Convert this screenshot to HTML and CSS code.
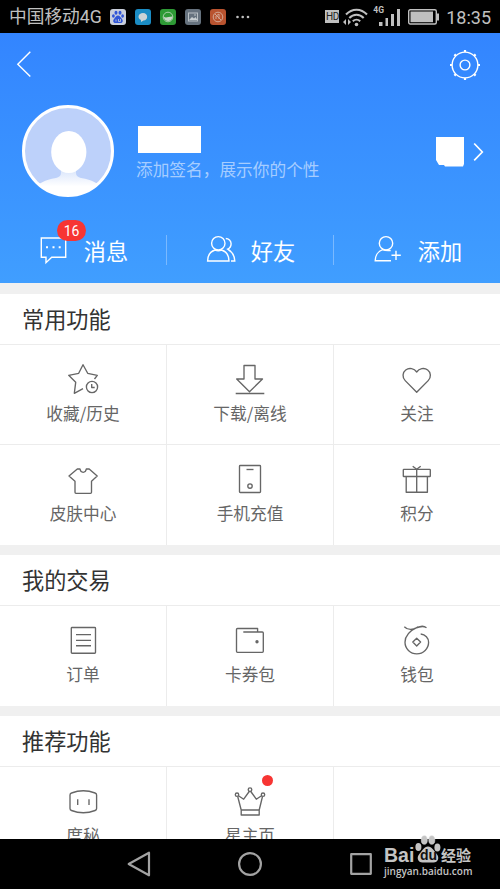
FILE: index.html
```html
<!DOCTYPE html>
<html lang="zh-CN">
<head>
<meta charset="utf-8">
<title>个人中心</title>
<link rel="stylesheet" href="styles.css">
</head>
<body>
<div class="phone">
  <div class="status">
    <span class="carrier">中国移动4G</span>
    <div class="apps">
      <svg viewBox="0 0 16 16"><rect width="16" height="16" rx="3" fill="#c9cfdc"/><g fill="#2f55d8"><ellipse cx="6" cy="3.8" rx="1.5" ry="2"/><ellipse cx="10" cy="3.8" rx="1.5" ry="2"/><ellipse cx="3.4" cy="7" rx="1.4" ry="1.8"/><ellipse cx="12.6" cy="7" rx="1.4" ry="1.8"/><path d="M8 6.600c2 0 2.600 2 4 3.400 1.600 1.800.6 4-1.500 4h-5c-2.100 0-3.100-2.200-1.500-4C5.400 8.600 6 6.600 8 6.600z"/></g><path d="M6 10.500v2M8.500 10v2.500h2V10" fill="none" stroke="#c9cfdc" stroke-width=".8"/></svg>
      <svg viewBox="0 0 16 16"><rect width="16" height="16" rx="3" fill="#1b8cc4"/><path d="M8 4c5.500 0 5.500 7.500.5 7.500L6 13v-2C2 9.500 3 4 8 4z" fill="#cbd3d6"/></svg>
      <svg viewBox="0 0 16 16"><rect width="16" height="16" rx="3" fill="#2e9a35"/><circle cx="8" cy="8" r="4.800" fill="none" stroke="#a9cfaa"/><path d="M3.500 7.500c2.500 2 4 .3 9 0-.5 6-8 6-9 0z" fill="#c9d6c9"/></svg>
      <svg viewBox="0 0 16 16"><rect width="16" height="16" rx="3" fill="#66727e"/><rect x="3.500" y="4" width="9" height="8" fill="none" stroke="#b9c0c5"/><path d="M4 11l3-3 2 1.500L10.500 8l2 3z" fill="#c9cfd2"/><circle cx="10" cy="6" r=".8" fill="#c9cfd2"/></svg>
      <svg viewBox="0 0 16 16"><rect width="16" height="16" rx="3" fill="#b9532f"/><g fill="none" stroke="#d3a795"><circle cx="8" cy="8" r="4.800"/><path d="M5 5l6 6M6 10V7l3-2v5"/></g></svg>
    </div>
    <svg class="more" viewBox="0 0 14 4" fill="#c0c0c0"><circle cx="1.500" cy="2" r="1.300"/><circle cx="6.700" cy="2" r="1.300"/><circle cx="12" cy="2" r="1.300"/></svg>
    <span class="hd">HD</span>
    <svg class="wifi" viewBox="0 0 26 20"><g fill="none" stroke="#c0c0c0" stroke-width="2"><path d="M3 7.500C9 1 18 1 24 7.500M6.300 11c4-4.300 10.400-4.300 14.400 0M9.800 14.300c2.200-2.200 5.200-2.200 7.400 0"/></g><circle cx="13.500" cy="17.500" r="1.800" fill="#c0c0c0"/><path d="M3 12v6l-3-3zM5 18v-6l3 3z" fill="#c0c0c0"/></svg>
    <div class="signal">
      <span>4G</span>
      <svg viewBox="0 0 21 18" fill="#c0c0c0"><path d="M0 13h3.500v4H0zM6.500 9H9v8H6.500zM12 5h3v12h-3zM18 0h3v17h-3z"/></svg>
    </div>
    <svg class="battery" viewBox="0 0 32 16"><rect x=".7" y=".7" width="27.600" height="14.300" rx="1.500" fill="none" stroke="#c0c0c0" stroke-width="1.400"/><rect x="2.500" y="2.500" width="22.500" height="10.700" fill="#c0c0c0"/><path d="M29 4.500h2v7h-2z" fill="#c0c0c0"/></svg>
    <span class="time">18:35</span>
  </div>

  <header class="header">
    <div class="toolbar">
      <svg class="back" viewBox="0 0 16 28"><path d="M14.300 1.800L1.800 14.200l12.500 12.300"/></svg>
      <svg class="gear" viewBox="0 0 32 32"><circle cx="16" cy="16" r="12.900"/><circle cx="16" cy="16" r="4.900"/><path d="M16 1v2M16 29v2M1 16h2M29 16h2M5.400 5.400l1.600 1.600M25 25l1.600 1.600M5.400 26.600L7 25M25 7l1.600-1.600" stroke-width="2.200"/></svg>
    </div>
    <div class="profile">
      <svg class="avatar" viewBox="0 0 92 92">
        <defs>
          <clipPath id="face"><circle cx="46" cy="46" r="44"/></clipPath>
          <linearGradient id="neck" x1="0" y1="0" x2="0" y2="1"><stop offset="0" stop-color="#cfdefa"/><stop offset=".65" stop-color="#fff"/></linearGradient>
        </defs>
        <circle cx="46" cy="46" r="45" fill="#bdd1fa"/>
        <g clip-path="url(#face)"><path d="M39 60h15v8c0 3 2 4 5 5 12 2 16 5 22 10v10H12V83c6-5 10-8 22-10 3-1 5-2 5-5z" fill="url(#neck)"/></g>
        <ellipse cx="46.800" cy="47" rx="17.600" ry="21" fill="#fff"/>
        <circle cx="46" cy="46" r="44.500" fill="none" stroke="#fff" stroke-width="3"/>
      </svg>
      <div class="who">
        <div class="name"></div>
        <div class="sign">添加签名，展示你的个性</div>
      </div>
      <svg class="qr" viewBox="0 0 28 30"><path d="M0 0h28v27l-1 2.500H9L8 28H3L0 23z" fill="#fff"/></svg>
      <svg class="go" viewBox="0 0 11 20"><path d="M1.200 1.500L9.300 10l-8.100 8.300"/></svg>
    </div>
    <nav class="actions">
      <a class="action">
        <svg viewBox="0 0 32 32"><path d="M3.300 4h24.400v19.300h-14l-5.700 5.400v-5.400H3.300z"/><path d="M8 13.300h2M14.500 13.300h2M20.700 13.300h2" stroke-width="2"/></svg>
        <span>消息</span><b class="badge">16</b>
      </a>
      <a class="action">
        <svg viewBox="0 0 32 32"><circle cx="13.300" cy="9.300" r="6.700"/><path d="M2.600 27c0-6 3-9.500 7.500-11 2 .9 4.400.9 6.400 0C21 17.500 24 21 24 27zM20.800 4.500c2.800 0 5.300 2.200 5.300 5.300 0 2.500-1.500 4.500-3.400 5.400 4.400 2.800 7.100 6.800 7.100 11.800H26"/></svg>
        <span>好友</span>
      </a>
      <a class="action">
        <svg viewBox="0 0 32 32"><circle cx="14" cy="9.300" r="6.700"/><path d="M19 26.700H3.200c0-5 3-9.500 7.500-11 2.300 1 5.500 1 8 .8M19.500 21.300h9.300M24 16.700V26"/></svg>
        <span>添加</span>
      </a>
    </nav>
  </header>

  <section class="section">
    <h2>常用功能</h2>
    <div class="grid">
      <div class="cell"><svg viewBox="0 0 34 34"><path d="M17 26.700l-8.700 4.600 1.400-11-7-7 10-2L17 2.700l4.700 8.600 9.600 2-2.800 3.700"/><circle cx="26" cy="25" r="5.600"/><path d="M25.700 22v3.500h3"/></svg><span>收藏/历史</span></div>
      <div class="cell"><svg viewBox="0 0 34 34"><path d="M11 3.500h11V17h7.500L16.500 29.700 3.700 17H11zM2.700 31.500h28.600"/></svg><span>下载/离线</span></div>
      <div class="cell"><svg viewBox="0 0 34 34"><path d="M16.700 30.300L5.200 18.600C2 15.300 2.500 10.300 5.700 8c3.600-2.700 8.500-1.500 11 2 2.500-3.500 7.400-4.700 11-2 3.200 2.300 3.700 7.300.5 10.600z"/></svg><span>关注</span></div>
      <div class="cell"><svg viewBox="0 0 34 34"><path d="M11.300 7H14c.8 4.400 5.500 4.400 6.300 0h2.900l8 7-5.700 5.200v11.100q0 1-1 1H10q-1 0-1-1V19.200L3 14z"/></svg><span>皮肤中心</span></div>
      <div class="cell"><svg viewBox="0 0 34 34"><rect x="6.500" y="3.500" width="21" height="27" rx=".8"/><path d="M13.500 7.500h7"/><circle cx="17" cy="24" r="2.200"/></svg><span>手机充值</span></div>
      <div class="cell"><svg viewBox="0 0 34 34"><rect x="3.300" y="7.300" width="27" height="7.200" rx=".6"/><path d="M6.200 14.500v15.700h21.200V14.500M16.700 7.300v22.900M12.700 4.200l4 3.100 4-3.100"/></svg><span>积分</span></div>
    </div>
  </section>

  <section class="section">
    <h2>我的交易</h2>
    <div class="grid">
      <div class="cell"><svg viewBox="0 0 34 34"><rect x="5.300" y="4.500" width="24.200" height="25.700" rx=".8"/><path d="M10 11.600h15M10 17.300h15M10 22.700h15"/></svg><span>订单</span></div>
      <div class="cell"><svg viewBox="0 0 34 34"><path d="M24.600 9V5.500H4.500q-1 0-1 1v21.800q0 1 1 1h24.800q1 0 1-1V10q0-1-1-1H10.300"/><circle cx="24" cy="18.700" r="1" class="dot"/></svg><span>卡券包</span></div>
      <div class="cell"><svg viewBox="0 0 34 34"><path d="M4.300 3.700c3 3 6.500 3.300 10 2C18.500 4 22.500 1.800 26.500 4.700M18 3.800C10 7.500 5 12.500 5 19.200a11.800 11.600 0 0 0 23.600 0c0-4.200-3.200-7.800-7.900-8.200"/><path d="M16.700 15.200l3.900 3.900-3.900 3.900-3.900-3.900z"/></svg><span>钱包</span></div>
    </div>
  </section>

  <section class="section last">
    <h2>推荐功能</h2>
    <div class="grid">
      <div class="cell"><svg viewBox="0 0 34 34"><path d="M4 11q0-1.500 1.500-2 11.800-4.500 23.600 0 1.500.5 1.500 2v13.500q0 1.500-1.500 2-11.800 4.500-23.600 0-1.500-.5-1.500-2zM11.700 15.300V21M23 15.300V21"/></svg><span>度秘</span></div>
      <div class="cell"><svg viewBox="0 0 34 34"><path d="M8.200 26h18v5h-18zM8.200 26L4.700 12.500M5.500 11.700l5.200 3.500 5.500-7.700M17.800 7.500l5.500 7.700 5.200-3.500M29.500 12.500L26.200 26"/><circle cx="4" cy="10.700" r="1.700"/><circle cx="17" cy="5.700" r="1.800"/><circle cx="30" cy="10.700" r="1.700"/></svg><span>星主页</span><i class="new"></i></div>
      <div class="cell"></div>
    </div>
  </section>

  <footer class="navbar">
    <svg viewBox="0 0 26 26"><path d="M2.700 13L23 1.700v22.600z"/></svg>
    <svg viewBox="0 0 26 26"><circle cx="13" cy="13" r="10.900"/></svg>
    <svg viewBox="0 0 26 26"><rect x="3.200" y="3.200" width="19.600" height="19.600"/></svg>
    <div class="brand">
      <div class="logo">
        <span class="bai">Bai</span>
        <span class="paw"><svg viewBox="0 0 26 28"><g fill="#c4c4c4"><ellipse cx="3.400" cy="12" rx="3" ry="4"/><ellipse cx="9.300" cy="5" rx="3" ry="4.300" stroke="#ddd" stroke-width=".6"/><ellipse cx="16.800" cy="5" rx="3" ry="4.300" stroke="#ddd" stroke-width=".6"/><ellipse cx="22.400" cy="12.500" rx="3" ry="4"/><path d="M13 11.500c4 0 5.500 4 8.500 7.300C25 22.700 23 27.500 18.500 27.500h-11C3 27.500 1 22.700 4.500 18.800 7.500 15.500 9 11.500 13 11.500z"/></g></svg><em>du</em></span>
        <span class="jy">经验</span>
      </div>
      <div class="url">jingyan.baidu.com</div>
    </div>
  </footer>
</div>
</body>
</html>
```
FILE: styles.css
```css
* { box-sizing: border-box; }
body {
  margin: 0;
  font-family: "Noto Sans CJK SC", sans-serif;
  background: #000;
}
svg { display: block; flex: none; }
.phone {
  width: 500px;
  height: 889px;
  display: flex;
  flex-direction: column;
  overflow: hidden;
  background: #f0f0f0;
}

/* system status bar */
.status {
  flex: none;
  height: 33px;
  display: flex;
  align-items: center;
  padding: 0 9px;
  background: #000;
  color: #c0c0c0;
}
.carrier {
  width: 102px;
  padding-top: 2px;
  font: 17.700px/33px Roboto, "Noto Sans CJK SC", sans-serif;
  white-space: nowrap;
}
.apps { display: flex; gap: 9px; }
.apps svg { width: 16px; height: 16px; }
.more { width: 14px; height: 4px; margin-left: 10px; }
.hd {
  width: 14px;
  height: 13px;
  margin-left: 75px;
  background: #c0c0c0;
  color: #222;
  font: 10px/13px Roboto, sans-serif;
  letter-spacing: -.5px;
  text-align: center;
}
.wifi { width: 26px; height: 20px; margin-left: 4px; }
.signal { display: flex; width: 28px; height: 22px; margin-left: 4px; }
.signal span { width: 7px; font: bold 8.500px/9px Roboto, sans-serif; }
.signal svg { width: 21px; height: 18px; margin: 3px 0 0 -1px; }
.battery { width: 32px; height: 16px; margin-left: 7px; }
.time { margin-left: 6px; padding-top: 2px; font: 18px/33px Roboto, sans-serif; }

/* profile header */
.header {
  flex: none;
  height: 250px;
  background: linear-gradient(#3385ff, #409eff);
  color: #fff;
}
.toolbar {
  height: 72px;
  display: flex;
  justify-content: space-between;
  padding: 16px 19px 0 16px;
}
.back, .gear, .go, .action svg { fill: none; stroke: #fff; stroke-width: 1.400; }
.back { width: 16px; height: 28px; margin-top: 1px; }
.gear { width: 32px; height: 32px; }
.profile {
  height: 92px;
  display: flex;
  align-items: center;
  padding: 0 16px 0 22px;
}
.avatar { width: 92px; height: 92px; }
.who { flex: 1; margin-left: 22px; padding-top: 5px; }
.name { width: 63px; height: 27px; margin-left: 2px; background: #fff; }
.sign { margin-top: 4px; font-size: 16.700px; line-height: 24px; color: #a6cdff; }
.qr { width: 28px; height: 30px; margin: 2px 9px 0 0; }
.go { width: 11px; height: 20px; margin-top: 1px; stroke-width: 1.700; }
.actions { display: grid; grid-template-columns: 166px 167px 167px; padding-top: 38px; }
.action {
  position: relative;
  height: 30px;
  display: flex;
  align-items: center;
  justify-content: center;
  gap: 14px;
  font-size: 22.200px;
  line-height: 30px;
}
.action + .action { border-left: 1px solid #7ab9ff; }
.action svg { width: 32px; height: 32px; }
.badge {
  position: absolute;
  left: 57px;
  top: -15px;
  width: 29px;
  height: 21px;
  border-radius: 11px;
  background: #f73533;
  font: 14px/22px Roboto, sans-serif;
  text-align: center;
}

/* feature sections */
.section { flex: none; margin-top: 11px; background: #fff; }
.section + .section { margin-top: 10px; }
.last { flex: 1 1 0; min-height: 0; overflow: hidden; }
.section h2 {
  height: 51px;
  margin: 0;
  padding-left: 22px;
  border-bottom: 1px solid #ececec;
  color: #333;
  font-size: 22.200px;
  font-weight: 400;
  line-height: 49px;
}
.grid { display: grid; grid-template-columns: 166px 167px 167px; }
.cell {
  position: relative;
  height: 100px;
  display: flex;
  flex-direction: column;
  align-items: center;
  padding-top: 17px;
  color: #666;
  font-size: 16.700px;
  line-height: 24px;
}
.cell:not(:nth-child(3n+1)) { border-left: 1px solid #ececec; }
.cell:nth-child(n+4) { height: 101px; margin-top: -1px; border-top: 1px solid #ececec; }
.cell svg {
  width: 34px;
  height: 34px;
  margin-bottom: 5px;
  fill: none;
  stroke: #666;
  stroke-width: 1.350;
  stroke-linejoin: round;
}
.cell .dot { fill: #666; }
.new {
  position: absolute;
  left: 95px;
  top: 8px;
  width: 11px;
  height: 11px;
  border-radius: 50%;
  background: #f73533;
}

/* system navigation */
.navbar {
  position: relative;
  flex: none;
  height: 50px;
  display: flex;
  align-items: center;
  justify-content: center;
  gap: 85px;
  background: #000;
}
.navbar > svg { width: 26px; height: 26px; fill: none; stroke: #a3a3a3; stroke-width: 2.200; stroke-linejoin: round; }
.brand { position: absolute; left: 384px; top: -4px; color: #c4c4c4; }
.logo { display: flex; height: 29px; }
.bai { width: 31px; padding-top: 11px; font: bold 19.500px/18px "Liberation Sans", sans-serif; }
.paw { position: relative; width: 26px; }
.paw svg { width: 26px; height: 28px; }
.paw em {
  position: absolute;
  left: 5px;
  top: 13px;
  color: #111;
  font: bold 14px/14px "Liberation Sans", sans-serif;
}
.jy { padding-top: 12px; font-weight: 700; font-size: 15px; line-height: 16px; }
.url { font: 600 10px/14px "Open Sans", sans-serif; }
```
